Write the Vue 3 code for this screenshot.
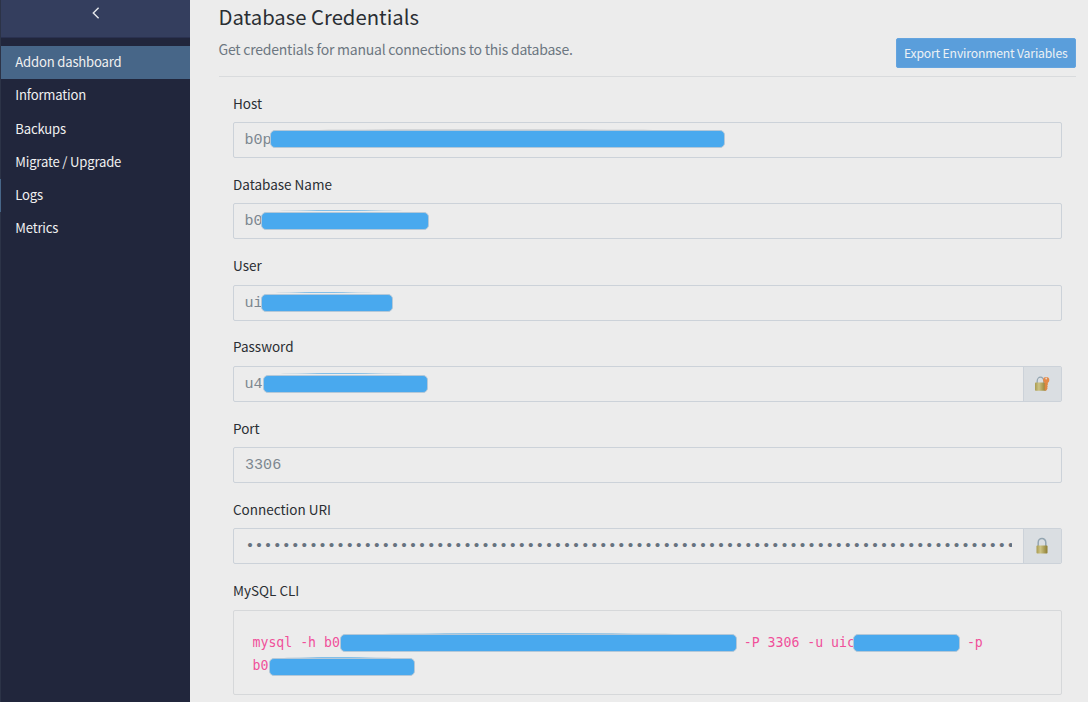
<script setup>
const menu = ['Addon dashboard', 'Information', 'Backups', 'Migrate / Upgrade', 'Logs', 'Metrics']

const fields = [
  { key: 'host', label: 'Host', value: 'b0p' },
  { key: 'name', label: 'Database Name', value: 'b0' },
  { key: 'user', label: 'User', value: 'ui' },
  { key: 'password', label: 'Password', value: 'u4', lock: 'key' },
  { key: 'port', label: 'Port', value: '3306' },
  { key: 'uri', label: 'Connection URI', value: '•'.repeat(85), lock: 'plain' },
]
</script>

<template>
  <div class="page">
    <aside class="sidebar">
      <div class="collapse">
        <svg width="10" height="14" viewBox="0 0 10 14"><path d="M7.6 1.8 2.3 7l5.3 5.2" /></svg>
      </div>
      <nav class="menu">
        <a v-for="(item, i) in menu" :key="item" class="item" :class="{ active: i === 0, marked: i === 4 }">{{ item }}</a>
      </nav>
    </aside>

    <main class="main">
      <header class="head">
        <div>
          <h1>Database Credentials</h1>
          <p>Get credentials for manual connections to this database.</p>
        </div>
        <button class="export">Export Environment Variables</button>
      </header>

      <section class="form">
        <div v-for="f in fields" :key="f.key" class="field">
          <label>{{ f.label }}</label>
          <div class="control">
            <div class="value" :class="f.key">
              <span class="text">{{ f.value }}</span>
              <span v-if="f.key !== 'port' && f.key !== 'uri'" class="mask" :class="'mask-' + f.key"></span>
            </div>
            <div v-if="f.lock" class="addon">
              <svg width="18" height="18" viewBox="0 0 18 18">
                <defs>
                  <linearGradient :id="'g' + f.lock" x1="0" x2="1" y1="0" y2="0">
                    <stop offset="0" stop-color="#a99b50" />
                    <stop offset="0.35" stop-color="#cdc384" />
                    <stop offset="1" stop-color="#8d7d32" />
                  </linearGradient>
                </defs>
                <g v-if="f.lock === 'key'">
                  <path d="M4.2 8V6a3.3 3.8 0 0 1 6.6 0V8" fill="none" stroke="#93a5b1" stroke-width="1.3" />
                  <rect x="2" y="7.5" width="11" height="8.2" rx="0.8" :fill="'url(#g' + f.lock + ')'" />
                  <path d="M11.6 7.5h3.2v2.4l-.7.8.7.8-.6 1 .4.8-1.2 2.2h-1.8Z" fill="#de8742" />
                  <circle cx="13.2" cy="5" r="3.1" fill="#e58a48" />
                  <circle cx="13.2" cy="3.5" r="0.9" fill="#e4d6cc" />
                </g>
                <g v-else>
                  <path d="M5.2 9V5.4a3.8 3.9 0 0 1 7.6 0V9" fill="none" stroke="#93a5b1" stroke-width="1.5" />
                  <rect x="3.5" y="8.6" width="11" height="8" rx="0.8" :fill="'url(#g' + f.lock + ')'" />
                </g>
              </svg>
            </div>
          </div>
        </div>

        <div class="field">
          <label>MySQL CLI</label>
          <pre class="cli"><code>mysql -h b0<span class="mask m1"></span> -P 3306 -u uic<span class="mask m2"></span> -p
b0<span class="mask m3"></span></code></pre>
        </div>
      </section>
    </main>
  </div>
</template>

<style>
body {
  margin: 0;
  background: #ececec;
}
</style>

<style scoped>
.page {
  display: flex;
  width: 1088px;
  height: 702px;
  overflow: hidden;
  background: #ececec;
  font-family: "Noto Sans CJK SC", "Open Sans", sans-serif;
  color: #2a2e33;
}
.sidebar {
  box-sizing: border-box;
  flex: 0 0 190px;
  border-left: 1px solid #2c3347;
  background: #21263c;
}
.collapse {
  box-sizing: border-box;
  display: flex;
  justify-content: center;
  height: 38px;
  padding-top: 6px;
  border-bottom: 1px solid #2a3150;
  background: #343e5e;
}
.collapse path {
  fill: none;
  stroke: #e6e8ec;
  stroke-width: 1.4;
}
.menu {
  display: flex;
  flex-direction: column;
  padding-top: 8.4px;
}
.item {
  box-sizing: border-box;
  height: 33.1px;
  padding-left: 14.3px;
  line-height: 31px;
  font-size: 13.1px;
  letter-spacing: -0.18px;
  color: #f0f0f0;
}
.item.active {
  background: #476688;
}
.item.marked {
  margin-left: -1px;
  border-left: 1px solid #476688;
}
.main {
  flex: 1;
  min-width: 0;
  padding: 0 12px 0 28.5px;
}
.head {
  box-sizing: border-box;
  display: flex;
  justify-content: space-between;
  height: 77px;
  border-bottom: 1px solid #d9dbdd;
}
h1 {
  margin: 1.5px 0 0;
  font-size: 20.3px;
  line-height: 28px;
  font-weight: 400;
  white-space: nowrap;
}
p {
  margin: 8.5px 0 0;
  font-size: 14px;
  line-height: 22px;
  letter-spacing: -0.22px;
  color: #6c7781;
  white-space: nowrap;
}
.export {
  box-sizing: border-box;
  width: 180.5px;
  height: 30px;
  margin-top: 38px;
  padding: 0;
  border: 1px solid #64a4df;
  border-radius: 2px;
  background: #5a9edb;
  color: #ecf1f5;
  font: 12.2px/26px "Noto Sans CJK SC", "Open Sans", sans-serif;
  letter-spacing: -0.17px;
  white-space: nowrap;
}
.form {
  padding: 15.5px 14px 0 14px;
}
.field {
  height: 81.3px;
}
label {
  display: block;
  height: 29.5px;
  padding-left: 0.5px;
  line-height: 20px;
  font-size: 13.5px;
}
.control {
  box-sizing: border-box;
  display: flex;
  height: 36px;
  border: 1px solid #ccd2d9;
  border-radius: 2px;
}
.value {
  position: relative;
  display: flex;
  flex: 1;
  align-items: center;
  min-width: 0;
  padding: 0 11px;
  font-family: "Liberation Mono", monospace;
  font-size: 15.1px;
  color: #7d8790;
}
.text {
  overflow: hidden;
  white-space: nowrap;
}
.port {
  padding-left: 11.5px;
}
.uri {
  padding-left: 12px;
}
.uri .text {
  color: #66727f;
}
.addon {
  box-sizing: border-box;
  display: flex;
  align-items: center;
  justify-content: center;
  width: 38px;
  padding-right: 1px;
  border-left: 1px solid #ccd2d9;
  background: #dadee2;
}
.mask {
  position: relative;
  box-sizing: border-box;
  display: inline-block;
  height: 18px;
  border: 1px solid #b4c8d8;
  border-radius: 5px;
  background: #49a9ee;
}
.mask::before {
  content: "";
  position: absolute;
  left: 10%;
  right: 15%;
  top: -3px;
  height: 1px;
  border-radius: 50%;
  background: linear-gradient(90deg, #d6d9db, #83bfe8 35%, #83bfe8 60%, #d6d9db);
}
.mask-host { width: 455px; margin: -2px 0 0 -1.6px; }
.mask-host::before { top: -2px; background: #d3d5d7; }
.mask-name { width: 168px; margin-left: -1.6px; }
.mask-user { width: 132px; margin-left: -1.6px; }
.mask-password { width: 165px; margin-left: 0.4px; }
.cli {
  box-sizing: border-box;
  height: 85px;
  margin: 0;
  padding: 21.3px 19px 0;
  border: 1px solid #d6d8da;
  border-radius: 2px;
  font: 13.2px/22.6px "DejaVu Sans Mono", monospace;
  color: #f0509a;
}
.cli code {
  font: inherit;
}
.cli .mask {
  vertical-align: middle;
}
.cli .mask::before {
  top: -2px;
}
.m1 { width: 397px; margin-right: -1px; }
.m2 { width: 107px; margin: 0 -1px 0 -2px; }
.m3 { top: 1px; width: 146px; margin-left: 0.5px; }
.m2::before { display: none; }
</style>
